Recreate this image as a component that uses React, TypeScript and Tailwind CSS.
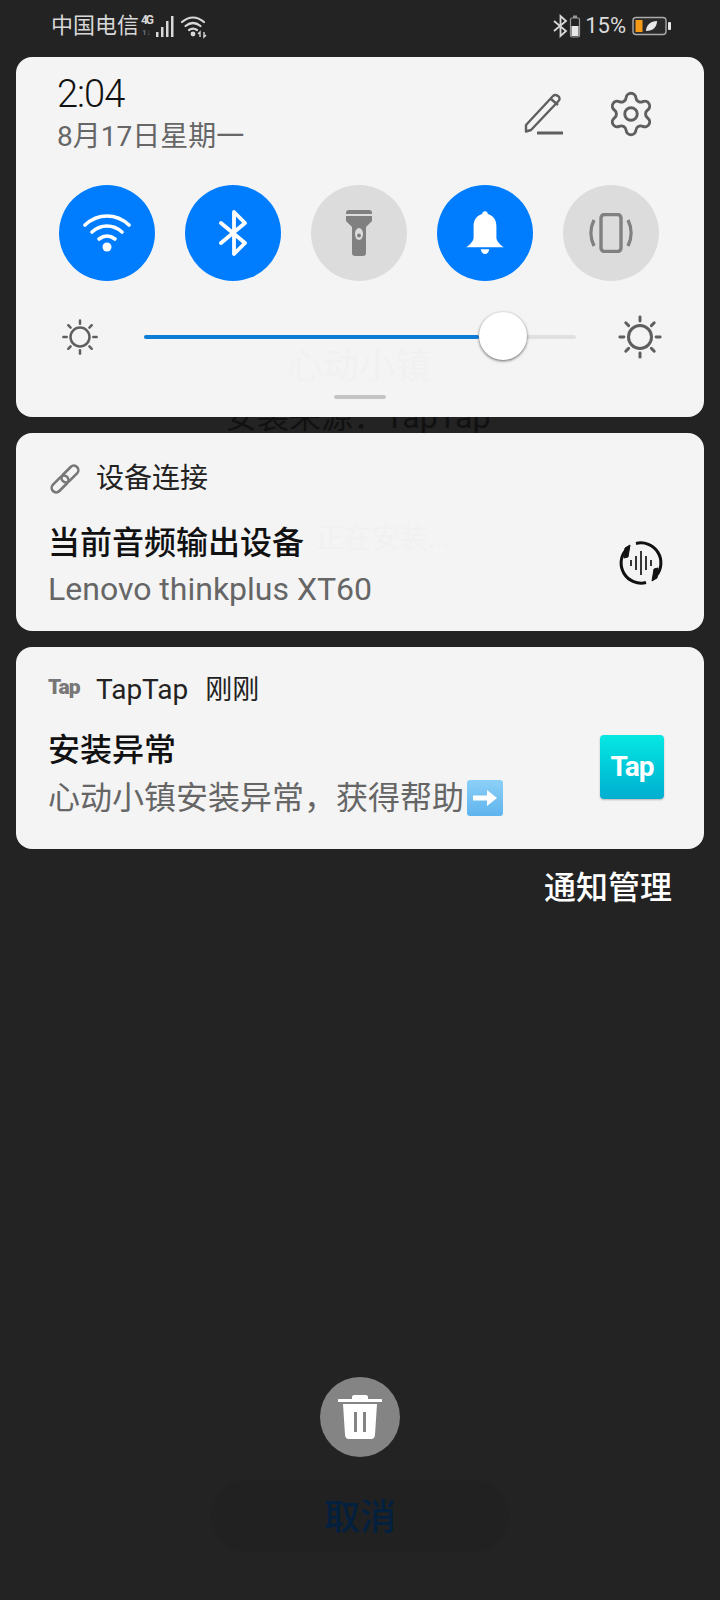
import { Settings } from "lucide-react";

const FONT = "font-['Roboto','Noto_Sans_CJK_SC',sans-serif]";

function StatusBar() {
  return (
    <div className="flex h-[57px] items-center justify-between pl-[51px] pr-[48px] pb-[6px] text-[#d8d8d8]">
      <div className="flex items-center">
        <span className="text-[22px] leading-[26px]">中国电信</span>
        <svg width="70" height="26" viewBox="0 0 70 26" className="ml-[2px]">
          <text x="0" y="11" fontSize="12" fontWeight="700" fill="#d8d8d8" fontFamily="Roboto" textLength="13">4G</text>
          <text x="1" y="22" fontSize="8" fontWeight="700" fill="#6f6f6f" fontFamily="Roboto">1↓</text>
          <rect x="15" y="19" width="2.500" height="5" fill="#d8d8d8" />
          <rect x="20" y="14" width="2.500" height="10" fill="#d8d8d8" />
          <rect x="25" y="8" width="2.500" height="16" fill="#d8d8d8" />
          <rect x="30" y="3" width="2.500" height="21" fill="#d8d8d8" />
          <g fill="none" stroke="#d8d8d8" strokeWidth="2.200" strokeLinecap="round">
            <path d="M41 9c7-6 15-6 22 0" />
            <path d="M44.500 13c5-4 10-4 15 0" />
            <path d="M48 17c3-2 5-2 8 0" />
          </g>
          <circle cx="52" cy="21" r="2.400" fill="#d8d8d8" />
          <path d="M59 24v-5l-2 2M63 19v5l2-2" stroke="#d8d8d8" strokeWidth="1.400" fill="none" />
        </svg>
      </div>
      <div className="flex items-center">
        <svg width="15" height="24" viewBox="0 0 15 24" fill="none" stroke="#d8d8d8" strokeWidth="1.800">
          <path d="M1 7l12 10-5.500 5V2L13 7 1 17" />
        </svg>
        <svg width="12" height="26" viewBox="0 0 12 26" className="ml-[1px]">
          <rect x="1.500" y="5" width="9" height="19" rx="1.500" fill="none" stroke="#999" strokeWidth="1.200" />
          <rect x="4" y="2.500" width="4" height="2.500" fill="#999" />
          <rect x="2.500" y="13" width="7" height="10" fill="#e8e8e8" />
        </svg>
        <span className="ml-[4px] text-[22px] leading-[26px] text-[#dcdcdc]">15%</span>
        <svg width="40" height="20" viewBox="0 0 40 20" className="ml-[6px]">
          <rect x="1" y="1.500" width="33" height="17" rx="3" fill="#2a2a2a" stroke="#aaa" strokeWidth="1.400" />
          <rect x="3.500" y="4" width="7" height="12" fill="#f59a17" />
          <path d="M14 15c0-6 5-10 11-10 0 6-4 10-11 10z" fill="#e8e8e8" />
          <rect x="36" y="6" width="3" height="8" rx="1" fill="#e8e8e8" />
        </svg>
      </div>
    </div>
  );
}

function Sun({ size }: { size: number }) {
  const rays = [0, 45, 90, 135, 180, 225, 270, 315];
  return (
    <svg width={size} height={size} viewBox="0 0 40 40" fill="none" stroke="#5f5f5f" strokeWidth="2.600" strokeLinecap="round">
      <circle cx="20" cy="20" r="10" />
      {rays.map((r) => (
        <path key={r} d="M20 2.500v3.500" transform={`rotate(${r} 20 20)`} />
      ))}
    </svg>
  );
}

function Toggle({ on, children }: { on?: boolean; children: React.ReactNode }) {
  return (
    <div className={`flex h-[96px] w-[96px] items-center justify-center rounded-full ${on ? "bg-[#007dff]" : "bg-[#dcdcdc]"}`}>
      {children}
    </div>
  );
}

function QuickPanel() {
  return (
    <div className="relative z-10 mx-4 h-[360px] rounded-[16px] bg-[#f4f4f4] pl-[41px] pr-[45px]">
      <div className="absolute left-[271px] top-[288px] text-[36px] leading-[44px] text-[#f1f1f1]">心动小镇</div>
      <div className="relative flex items-start justify-between pt-[15px]">
        <div>
          <div className="text-[38px] leading-[44px] font-light tracking-[-1px] text-[#111]">2:04</div>
          <div className="text-[28px] leading-[30px] text-[#666] mt-[6px]">8月17日星期一</div>
        </div>
        <div className="flex items-center gap-[41px] pt-[17px] pr-[3px]">
          <svg width="42" height="44" viewBox="0 0 42 44" fill="none" stroke="#5f5f5f" strokeWidth="2.400" strokeLinejoin="round">
            <path d="M3 33 30 4c1.500-1.500 3-1.500 5-.0s2 3.500.5 5L8 38l-5 1.500z" />
            <path d="M28 7l7 6" />
            <path d="M14 41h26" strokeWidth="3" />
          </svg>
          <Settings size={50} strokeWidth={1.400} color="#5f5f5f" />
        </div>
      </div>
      <div className="relative mt-[33px] flex justify-between pl-[2px]">
        <Toggle on>
          <svg width="48" height="38" viewBox="0 0 48 38" fill="none" stroke="#fff" strokeWidth="3.600" strokeLinecap="round">
            <path d="M2 11c13-12 31-12 44 0" />
            <path d="M9 18c9-8 21-8 30 0" />
            <path d="M16 25c5-4 11-4 16 0" />
            <circle cx="24" cy="33" r="4.500" fill="#fff" stroke="none" />
          </svg>
        </Toggle>
        <Toggle on>
          <svg width="30" height="46" viewBox="0 0 30 46" fill="none" stroke="#fff" strokeWidth="3.800" strokeLinejoin="round" strokeLinecap="round">
            <path d="M3 13l24 20-11 11V2l11 11L3 33" />
          </svg>
        </Toggle>
        <Toggle>
          <svg width="26" height="46" viewBox="0 0 26 46" fill="#808080">
            <path d="M3 0h20a3 3 0 013 3v1H0V3a3 3 0 013-3z" />
            <path d="M0 6h26v5l-6 6H6l-6-6z" />
            <path d="M6 14h14v29a3 3 0 01-3 3H9a3 3 0 01-3-3z" />
            <ellipse cx="13" cy="24" rx="4" ry="6" fill="#dcdcdc" />
            <circle cx="13" cy="25.500" r="2" fill="#808080" />
          </svg>
        </Toggle>
        <Toggle on>
          <svg width="38" height="44" viewBox="0 0 40 46" fill="#fff">
            <path d="M20 0c1.800 0 3 1.200 3 3 6 1.500 9 6.500 9 13v12c0 3 4 8 8 10H0c4-2 8-7 8-10V16C8 9.500 11 4.500 17 3c0-1.800 1.200-3 3-3z" />
            <path d="M15.500 40h9c-.5 3-2.200 5-4.500 5s-4-2-4.500-5z" />
          </svg>
        </Toggle>
        <Toggle>
          <svg width="44" height="40" viewBox="0 0 44 40" fill="none" stroke="#808080">
            <rect x="12" y="1.500" width="20" height="37" rx="3.500" strokeWidth="3.400" />
            <path d="M5 7C1 15 1 25 5 33" strokeWidth="3.400" />
            <path d="M39 7c4 8 4 18 0 26" strokeWidth="3.400" />
          </svg>
        </Toggle>
      </div>
      <div className="relative mt-[32px] -mr-[4px] flex h-[48px] items-center">
        <div className="ml-[4px] shrink-0"><Sun size={38} /></div>
        <div className="relative ml-[45px] mr-[41px] h-[4px] flex-1 rounded-full bg-[#e0e0e0]">
          <div className="h-full w-[335px] rounded-full bg-[#0c7cd9]" />
          <div className="absolute left-[335px] top-[-23px] h-[48px] w-[48px] rounded-full bg-white shadow-[0_1px_3px_rgba(0,0,0,0.6)]" />
        </div>
        <div className="shrink-0"><Sun size={46} /></div>
      </div>
      <div className="absolute bottom-[18px] left-1/2 h-[4px] w-[52px] -translate-x-1/2 rounded-full bg-[#c4c4c4]" />
    </div>
  );
}

function AudioCard() {
  return (
    <div className="relative z-10 mx-4 h-[198px] rounded-[16px] bg-[#f4f4f4] pl-[32px] pr-[40px]">
      <div className="absolute left-[300px] top-[90px] text-[28px] leading-[32px] text-[#f1f1f1]">正在安装...</div>
      <div className="relative flex h-[92px] items-center">
        <svg width="30" height="30" viewBox="0 0 30 30" fill="none" stroke="#777" strokeWidth="2.600" className="ml-[2px]">
          <g transform="rotate(45 15 15)">
            <rect x="10.500" y="-2" width="9" height="20" rx="4.500" />
            <rect x="10.500" y="12" width="9" height="20" rx="4.500" />
          </g>
        </svg>
        <span className="ml-[16px] text-[28px] leading-[32px] text-[#222]">设备连接</span>
      </div>
      <div className="relative flex items-center justify-between">
        <div>
          <div className="mt-[-2px] text-[32px] leading-[40px] font-medium text-[#111]">当前音频输出设备</div>
          <div className="mt-[7px] text-[32px] leading-[38px] text-[#666]">Lenovo thinkplus XT60</div>
        </div>
        <svg width="46" height="46" viewBox="0 0 46 46" fill="none" stroke="#111" strokeWidth="3" className="mt-[-8px]">
          <path d="M18 3.500A20 20 0 0138 36" />
          <path d="M28 42.500A20 20 0 018 10" />
          <path d="M36 29l4-1-1 10-5 3zM10 17l-4 1 1-10 5-3z" fill="#111" strokeWidth="1" />
          <path d="M13 20v6M18 16v14M23 11v24M28 16v14M33 20v6" strokeWidth="1.800" stroke="#222" />
        </svg>
      </div>
    </div>
  );
}

function TapTapCard() {
  return (
    <div className="relative z-10 mx-4 h-[202px] rounded-[16px] bg-[#f4f4f4] pl-[32px] pr-[40px]">
      <div className="flex h-[86px] items-center">
        <span className="w-[32px] text-[21px] leading-[24px] font-black tracking-[-1px] text-[#777] mt-[-6px]">Tap</span>
        <span className="ml-[16px] text-[28px] leading-[32px] text-[#222]">TapTap</span>
        <span className="ml-[17px] text-[27px] leading-[32px] text-[#222]">刚刚</span>
      </div>
      <div className="flex items-center justify-between">
        <div>
          <div className="mt-[-3px] text-[32px] leading-[40px] font-medium text-[#111]">安装异常</div>
          <div className="mt-[9px] flex items-center text-[32px] leading-[38px] text-[#666]">
            <span>心动小镇安装异常，获得帮助</span>
            <span className="ml-[3px] flex h-[36px] w-[36px] items-center justify-center rounded-[3px] bg-gradient-to-b from-[#8cd0f7] to-[#5eb4ee]">
              <svg width="26" height="20" viewBox="0 0 26 20" fill="#fff">
                <path d="M1 7.500h14V2l10 8-10 8v-5.500H1z" />
              </svg>
            </span>
          </div>
        </div>
        <div className="mt-[-16px] flex h-[64px] w-[64px] items-center justify-center rounded-[4px] bg-gradient-to-b from-[#07e8e2] to-[#02aed0] text-[28px] font-bold tracking-[-1px] text-white shadow-[0_1px_2px_rgba(0,0,0,0.25)]">
          Tap
        </div>
      </div>
    </div>
  );
}

export default function App() {
  return (
    <div className={`${FONT} relative flex h-[1600px] w-[720px] flex-col overflow-hidden bg-[#232323]`}>
      <StatusBar />
      <QuickPanel />
      <div className="absolute left-[225px] top-[397px] text-[32px] leading-[40px] text-[#111]">安装来源：TapTap</div>
      <div className="mt-[16px] flex flex-col gap-[16px]">
        <AudioCard />
        <TapTapCard />
      </div>
      <div className="mt-[17px] pr-[48px] text-right text-[32px] leading-[44px] font-medium text-white">通知管理</div>
      <div className="mt-auto flex flex-col items-center pb-[48px]">
        <div className="flex h-[80px] w-[80px] items-center justify-center rounded-full bg-[#848484]">
          <svg width="44" height="44" viewBox="0 0 44 44" fill="#fff">
            <path d="M14 2c0-1 1-2 2-2h12c1 0 2 1 2 2v2h13a1 1 0 010 3H1a1 1 0 010-3h13z" />
            <path d="M5 9h34l-2 31c-.1 2-1.500 4-3.500 4h-23c-2 0-3.400-2-3.500-4z" />
            <rect x="16" y="17" width="3" height="20" fill="#848484" />
            <rect x="25" y="17" width="3" height="20" fill="#848484" />
          </svg>
        </div>
        <div className="mt-[23px] flex h-[72px] w-[298px] items-center justify-center rounded-full bg-[#212121] pt-[4px] text-[36px] font-medium text-[#04203f]">
          取消
        </div>
      </div>
    </div>
  );
}
